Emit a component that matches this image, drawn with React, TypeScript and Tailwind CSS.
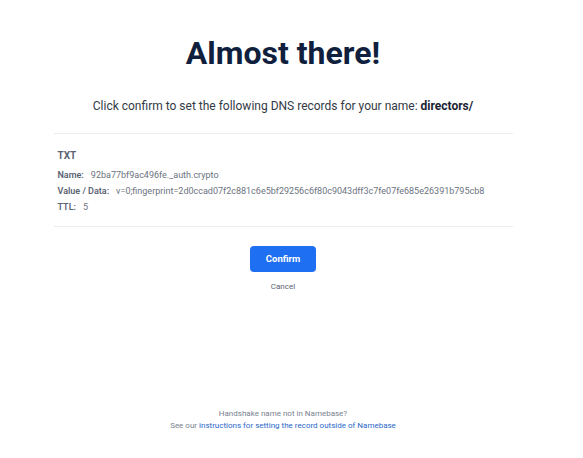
import React from "react";

const record = {
  type: "TXT",
  name: "92ba77bf9ac496fe._auth.crypto",
  value: "v=0;fingerprint=2d0ccad07f2c881c6e5bf29256c6f80c9043dff3c7fe07fe685e26391b795cb8",
  ttl: "5",
};

export default function App() {
  return (
    <div className="w-[566px] h-[458px] bg-white flex flex-col items-center font-['Roboto',sans-serif]">
      <h1 className="mt-[31px] text-[32px] leading-[44px] font-bold text-[#0f1f3d]">Almost there!</h1>
      <p className="mt-[22px] text-[12px] leading-[18px] text-[#333a45]">
        Click confirm to set the following DNS records for your name: <span className="font-bold text-[#1b2233]">directors/</span>
      </p>

      <div className="mt-[18px] w-[459px] border-t border-b border-[#ebedf0] px-[4px] pt-[15px] pb-[12px]">
        <div className="text-[10px] leading-[14px] font-bold text-[#5b6473]">{record.type}</div>
        <div className="mt-[5px] flex flex-col gap-[2px] text-[9px] leading-[14px] text-[#6b7380]">
          <div>
            <span className="font-semibold text-[#5b6473]">Name:</span>
            <span className="ml-[7px]">{record.name}</span>
          </div>
          <div>
            <span className="font-semibold text-[#5b6473]">Value / Data:</span>
            <span className="ml-[7px]">{record.value}</span>
          </div>
          <div>
            <span className="font-semibold text-[#5b6473]">TTL:</span>
            <span className="ml-[7px]">{record.ttl}</span>
          </div>
        </div>
      </div>

      <button className="mt-[19px] w-[66px] h-[26px] rounded-[4px] bg-[#1f6ff2] text-white text-[9.5px] font-bold">
        Confirm
      </button>
      <button className="mt-[10px] text-[8px] leading-[10px] text-[#5b6473]">Cancel</button>

      <div className="mt-auto mb-[26px] flex flex-col items-center text-[8px] leading-[12px] text-[#7a8290]">
        <span>Handshake name not in Namebase?</span>
        <span>
          See our <a className="text-[#2a67c9]">instructions for setting the record outside of Namebase</a>
        </span>
      </div>
    </div>
  );
}
